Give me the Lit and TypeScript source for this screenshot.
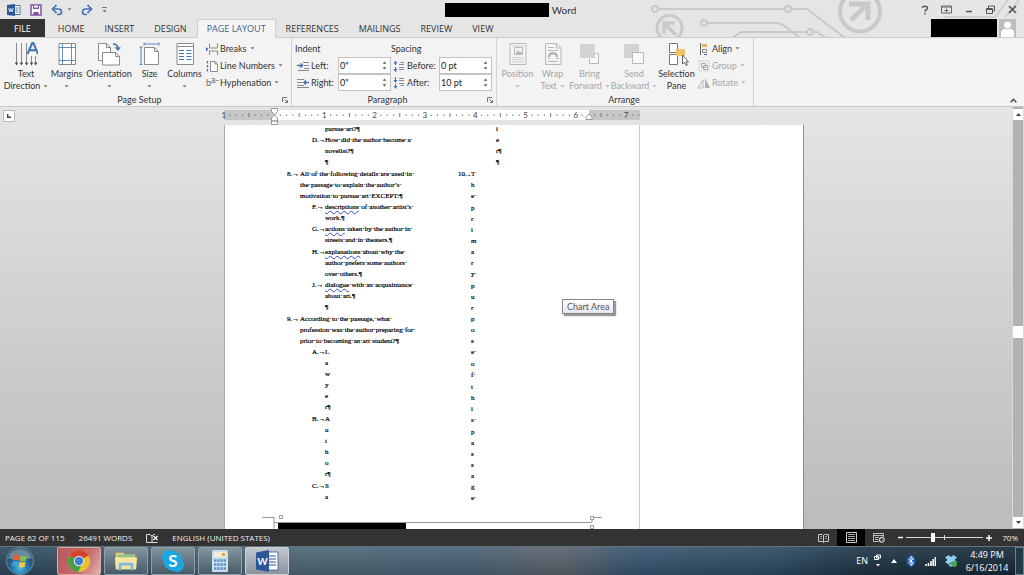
import { LitElement, html, css, svg, nothing } from "lit";
import { customElement } from "lit/decorators.js";

const caret = html`<svg class="caret" viewBox="0 0 5 3" width="5" height="3"><path d="M0.5 0.3h4L2.5 2.6z" fill="currentColor" /></svg>`;

const pic = (w: number, h: number, body: unknown) =>
  html`<svg width=${w} height=${h} viewBox="0 0 ${w} ${h}" fill="none" aria-hidden="true">${body}</svg>`;

const B = "#3f73b5";
const G = "#8a8a8a";
const D = "#b9b9b9";

const icons: Record<string, unknown> = {
  textDirection: pic(24, 24, svg`
    <path d="M2.5 1v20M7.5 1v20M12.5 1v20M17.5 14v7M21.5 14v7" stroke="${G}"/>
    <path d="M0.8 20.5h3.4L2.5 23.5zM5.8 20.5h3.4L7.5 23.5zM10.8 20.5h3.4L12.5 23.5zM15.8 20.5h3.4L17.5 23.5zM20 20.5h3.4L21.7 23.5z" fill="#444"/>
    <path d="M13.5 12L18.2 1h1.2L24 12M15.3 8.3h7" stroke="${B}" stroke-width="2"/>`),
  margins: pic(24, 24, svg`
    <path d="M4 1.5h16.5v21H4z" fill="#fff" stroke="${G}"/>
    <path d="M7.500 2v20M16.500 2v20M4 5.500h16M4 18.500h16" stroke="${B}" opacity=".8"/>`),
  orientation: pic(24, 24, svg`
    <path d="M1.500 1.500h8l4 4v13h-12z" fill="#fff" stroke="${G}"/><path d="M9.500 1.500v4h4" stroke="${G}"/>
    <path d="M5.500 10.500h13l4 4v8.500h-17z" fill="#fff" stroke="${G}"/><path d="M18.500 10.500v4h4" stroke="${G}"/>
    <path d="M16 2c3 0 5 1.500 5 5" stroke="${B}" stroke-width="1.500"/><path d="M17.800 5.200h6L21 9z" fill="${B}"/>`),
  size: pic(24, 24, svg`
    <path d="M6.500 5.500h10l4 4v13h-14z" fill="#fff" stroke="${G}"/><path d="M16.500 5.500v4h4" stroke="${G}"/>
    <path d="M6 2h15M3 5v18M6 .5v3M21 .5v3M1.500 5h3M1.500 22.500h3" stroke="${B}" opacity=".85"/>`),
  columns: pic(24, 24, svg`
    <path d="M4 1.500h16.500v21H4z" fill="#fff" stroke="${G}"/><path d="M4 4.500h16" stroke="${G}"/>
    <path d="M6 8.500h5M6 11.500h5M6 14.500h5M6 17.500h5M13.500 8.500h5M13.500 11.500h5M13.500 14.500h5M13.500 17.500h5" stroke="${B}"/>`),
  breaks: pic(12, 12, svg`
    <path d="M3.500 .5v4.500h8V.5M3.500 12V8h8v4" stroke="${G}"/><path d="M0 4l2.500 2.200L0 8.500z" fill="${B}"/>`),
  lineNumbers: pic(12, 12, svg`
    <path d="M4.500 1.500h4.500l2.500 2.500v7.500h-7z" fill="#fff" stroke="${G}"/><path d="M9 1.500V4h2.500" stroke="${G}"/>
    <path d="M1.500 1v2.500M1.500 5v2.500M1.500 9v2.500" stroke="${B}" stroke-width="1.300"/>`),
  hyphenation: html`<span class="hyph"><span>b</span><span class="up">a-</span></span>`,
  indentLeft: pic(12, 12, svg`<path d="M6 2.500h6M7 5.500h5M7 8.500h5M1 10.500h11" stroke="${G}"/><path d="M0 5.500h5" stroke="${B}" stroke-width="1.500"/><path d="M3.500 2.500l3 3-3 3z" fill="${B}"/>`),
  indentRight: pic(12, 12, svg`<path d="M0 2.500h7M0 5.500h6M0 8.500h7M0 10.500h12" stroke="${G}"/><path d="M7 5.500h5" stroke="${B}" stroke-width="1.500"/><path d="M9 2.500l-3 3 3 3z" fill="${B}"/>`),
  before: pic(12, 12, svg`<path d="M2.500 1v4M2.500 7v5" stroke="${B}"/><path d="M.5 3.500l2-3 2 3zM.5 9l2 3 2-3z" fill="${B}"/><path d="M6 4.500h5M7.500 2.500h3.500M6 7.500h5M6 9.500h5" stroke="${G}"/>`),
  after: pic(12, 12, svg`<path d="M2.500 0v4M2.500 7v4" stroke="${B}"/><path d="M.5 3l2 3 2-3zM.5 9l2 3 2-3z" fill="${B}"/><path d="M6 1.500h5M6 3.500h5M6 6.500h5M7.500 8.500h3.500" stroke="${G}"/>`),
  position: pic(24, 24, svg`<path d="M4 1.500h16v21H4z" fill="#f4f4f4" stroke="${D}"/><path d="M8.500 5.500h8v7h-8z" stroke="${D}"/><path d="M9.500 12l2.500-4 2 2.500 1-1 1.500 2.500z" fill="${D}"/><path d="M6 15.500h12M6 17.500h12M6 20h12M6 4h12" stroke="#d0d0d0"/>`),
  wrap: pic(24, 24, svg`<path d="M4.500 1.500h11l4.500 4.500v16.500H4.500z" fill="#f4f4f4" stroke="${D}"/><path d="M15.500 1.500V6h4.500M7 5.500h6M7 8.500h10M7 19.500h10M7 16.500h2M15 16.500h3" stroke="${D}"/><path d="M8 15c0-5 8-5 8 0" stroke="#aaa" stroke-width="2"/>`),
  forward: pic(24, 24, svg`<path d="M12.500 11.500h8v10h-9v-5" stroke="${D}" fill="#fafafa"/><path d="M2 2h15v14H2z" fill="#d4d2d4"/>`),
  backward: pic(24, 24, svg`<path d="M2 2h15v14H2z" fill="#d4d2d4"/><path d="M10.500 10.500h11v11h-11z" stroke="${D}" fill="#fafafa"/>`),
  selection: pic(24, 24, svg`<path d="M4.500 1.500h8v9h-8zM4.500 12.500h8v10h-8z" fill="#fff" stroke="#777"/><path d="M11 7h9v7h-9z" fill="#f2c26b"/><path d="M17.500 13v9l2-2 1.500 3.500 1.500-.7-1.500-3h2.500z" fill="#fff" stroke="#555" stroke-width=".9"/>`),
  align: pic(12, 12, svg`<path d="M2.500 0v12" stroke="#666"/><path d="M4 1h5v3H4z" fill="#e8b865"/><path d="M4.500 6.500h4v3h-4z" stroke="#888"/><path d="M6 11.500h3" stroke="${B}"/>`),
  group: pic(12, 12, svg`<path d="M1 1h10v10H1z" stroke="${D}" stroke-dasharray="1.500 1.500"/><path d="M3.500 3.500h4v4h-4zM5.500 5.500h4v4h-4z" stroke="#aaa"/>`),
  rotate: pic(12, 12, svg`<path d="M7 1v10h5z" fill="#b0b0b0"/><path d="M5 3v8H0z" stroke="${D}"/>`),
  chrome: pic(24, 24, svg`<circle cx="12" cy="12" r="11" fill="#e8c22c"/><path d="M12 12L2.500 6.500A11 11 0 0 1 21.500 6.500z" fill="#d6402f"/><path d="M2.500 6.500A11 11 0 0 0 11 23l4.500-9z" fill="#43a047"/><path d="M12 7h9.800a11 11 0 0 0-.5-1z" fill="#d6402f"/><circle cx="12" cy="12" r="5.200" fill="#eee"/><circle cx="12" cy="12" r="4.200" fill="#3f7fd0"/>`),
  folder: pic(26, 24, svg`<path d="M2 3h8l2 2h11v16H2z" fill="#e8cf74"/><path d="M4 5h18v5H4z" fill="#8fc48c"/><path d="M1 8h24l-1 13H2z" fill="#f5e6a3"/><path d="M5 22v-6q0-2 2-2h12q2 0 2 2v6h-3v-5H8v5z" fill="#7fb9dd"/>`),
  skype: html`<svg width="24" height="24" viewBox="0 0 24 24"><circle cx="8" cy="8" r="7" fill="#1ba6e0"/><circle cx="16" cy="16" r="7" fill="#1ba6e0"/><circle cx="12" cy="12" r="9.500" fill="#1ba6e0"/><text x="12" y="18" text-anchor="middle" font-size="17" font-weight="700" fill="#fff">S</text></svg>`,
  calc: pic(24, 24, svg`<rect x="4" y="1" width="16" height="22" rx="1.500" fill="#c9dff0"/><path d="M6 3h12v5H6z" fill="#f4f0e0"/><path d="M14 4h3v3h-3z" fill="#e8a040"/><path d="M6 11.500h12M6 15.500h12M6 19.500h12" stroke="#5f93c4" stroke-width="2.500" stroke-dasharray="2.400 .8"/>`),
  word: html`<svg width="24" height="24" viewBox="0 0 24 24"><path d="M12 3h11v18H12z" fill="#fff" stroke="#2b579a" stroke-width=".8"/><path d="M14 7h7M14 10h7M14 13h7M14 16h7" stroke="#2b579a"/><path d="M1 3.500L14 1v22L1 20.500z" fill="#2b579a"/><text x="7.500" y="16" text-anchor="middle" font-size="10" font-weight="700" fill="#fff">W</text></svg>`,
};

const big = (icon: string, lines: string[], cls: string, menu = true, off = false) => html`
  <button class="big ${cls}" ?disabled=${off}>
    ${icons[icon]}
    <span>${lines[0]}</span>
    <span class="second">${lines[1] ?? nothing}${menu ? caret : nothing}</span>
  </button>`;

const small = (icon: string, label: string, off = false) => html`
  <button class="small" ?disabled=${off}><span class="ic">${icons[icon]}</span>${label}${caret}</button>`;

const spin = (id: string, icon: string, label: string, value: string) => html`
  <label class="sl" for=${id}><span class="ic">${icons[icon]}</span>${label}</label>
  <div class="spin">
    <input id=${id} .value=${value} />
    <div class="steps">
      <button aria-label="Increase ${label}"><svg viewBox="0 0 5 3" width="5" height="3"><path d="M.7 2.700h3.600L2.500.5z" fill="#555"/></svg></button>
      <button aria-label="Decrease ${label}"><svg viewBox="0 0 5 3" width="5" height="3"><path d="M.7.3h3.600L2.500 2.500z" fill="#555"/></svg></button>
    </div>
  </div>`;

const dots = (s: string) => s.replace(/ /g, "·");
const lines = (ls: unknown[]) => ls.map((l) => html`<span class="line">${typeof l === "string" ? dots(l) : l}</span>`);
const item = (mark: string, ls: unknown[], cls = "") => html`
  <div class="item ${cls}"><span class="mark">${mark}<span class="tab">→</span></span><p>${lines(ls)}</p></div>`;
const bad = (word: string, rest: string) => html`<span class="bad">${word}</span>${dots(rest)}`;

const INCH = 50.3;
const ticks = () => {
  const out: unknown[] = [];
  for (let i = -8; i <= 58; i++) {
    const x = 53 + (i * INCH) / 8;
    if (i === 0) continue;
    if (i % 8 === 0) out.push(svg`<text x=${x} y="11" text-anchor="middle">${Math.abs(i / 8)}</text>`);
    else if (i % 4 === 0) out.push(svg`<path d="M${x} 6v4" stroke="#777"/>`);
    else out.push(svg`<path d="M${x} 7.500v1.500" stroke="#777"/>`);
  }
  return out;
};

@customElement("app-root")
export class AppRoot extends LitElement {
  static styles = css`
    :host {
      display: flex;
      flex-direction: column;
      height: 100vh;
      overflow: hidden;
      background: #e5e5e5;
      color: #333;
      font: 9px/12px Lato, "Open Sans", sans-serif;
    }
    * { box-sizing: border-box; }
    button, input { font: inherit; color: inherit; margin: 0; padding: 0; border: 0; background: none; border-radius: 0; }
    a { color: inherit; text-decoration: none; }
    p { margin: 0; }
    svg { display: block; flex: none; }

    .head { position: relative; flex: none; font-family: "Open Sans", sans-serif; }
    .circuit { position: absolute; right: 0; top: 0; }
    .title { position: relative; display: flex; height: 19px; align-items: center; }
    .quick { display: flex; align-items: center; flex: 1; padding-left: 7px; gap: 9px; }
    .quick button { display: flex; align-items: center; gap: 4px; color: #777; }
    .name { display: flex; align-items: center; gap: 3px; font: 10px/12px Lato, sans-serif; padding-right: 5px; }
    .redact { background: #000; width: 104px; height: 14px; }
    .win { flex: 1; display: flex; justify-content: flex-end; padding-right: 5px; gap: 9px; }
    .win button { display: grid; place-items: center; width: 13px; height: 16px; }
    .tabs { position: relative; display: flex; align-items: stretch; height: 19px; border-bottom: 1px solid #cfcfcf; }
    .tabs a { padding: 0 10px; line-height: 19px; white-space: nowrap; }
    .tabs .file { background: #333; color: #fff; padding: 0 14px; margin-right: 3px; }
    .tabs .on { background: #f4f4f4; color: #3a5f95; border: 1px solid #cfcfcf; border-bottom: 0; padding: 0 9px; line-height: 17px; height: 19px; }
    .user { margin-left: auto; display: flex; gap: 2px; padding-right: 8px; }
    .user .redact { width: 66px; height: 18px; }

    .ribbon { display: flex; flex: none; height: 69px; background: #f3f3f3; border-bottom: 1px solid #c8c8c8; }
    .group { display: flex; flex-direction: column; position: relative; padding-top: 2px; border-right: 1px solid #d2d2d2; }
    .body { display: flex; height: 54px; }
    .cap { text-align: center; color: #333; line-height: 12px; padding-right: 16px; }
    .arrange .cap { padding-right: 4px; }
    .launch { position: absolute; right: 3px; bottom: 3px; }
    .setup { padding-left: 4px; width: 292px; }
    .para { padding-left: 3px; width: 205px; }
    .arrange { padding-left: 2px; width: 257px; }
    .grow { flex: 1; display: flex; justify-content: flex-end; align-items: flex-end; padding: 0 7px 3px 0; }
    .big { display: flex; flex-direction: column; align-items: center; padding-top: 2px; white-space: nowrap; }
    .big > svg { margin-bottom: 2px; }
    .big .second { display: flex; align-items: center; gap: 3px; min-height: 12px; }
    .w33 { width: 33px; } .w37 { width: 37px; } .w41 { width: 41px; } .w44 { width: 44px; } .w48 { width: 48px; }
    button:disabled { color: #a6a6a6; }
    .stack { display: flex; flex-direction: column; padding-left: 3px; }
    .small { display: flex; align-items: center; height: 17px; white-space: nowrap; }
    .small .caret { margin-left: 3px; }
    .ic { width: 12px; margin-right: 2px; flex: none; }
    .caret { color: #777; }
    button:disabled .caret { color: #b5b5b5; }
    .hyph { display: flex; font-size: 9px; line-height: 10px; color: #666; }
    .hyph .up { margin-top: -3px; }
    .fields { display: grid; grid-template-columns: 43px 53px 48px 53px; grid-auto-rows: 17px; align-items: center; }
    .fields .h { grid-column: span 2; }
    .sl { display: flex; align-items: center; padding-left: 2px; white-space: nowrap; }
    .spin { display: flex; height: 17px; background: #fff; border: 1px solid #c3c3c3; }
    .spin input { flex: 1; min-width: 0; padding-left: 1px; color: #222; outline: 0; }
    .steps { display: flex; flex-direction: column; width: 12px; justify-content: space-evenly; align-items: center; }
    .steps button { line-height: 3px; }

    .work { position: relative; flex: 1; min-height: 0; display: flex; background: linear-gradient(#e5e5e5, #bdbdbd 95%); }
    .view { flex: 1; min-width: 0; display: flex; flex-direction: column; align-items: center; padding-left: 16px; position: relative; }
    .corner { position: absolute; left: 3px; top: 3px; width: 12px; height: 12px; background: #fff; border: 1px solid #bbb; display: grid; place-items: center; }
    .rulerrow { width: 586px; height: 18px; flex: none; }
    .rulerrow text { font-size: 8px; fill: #444; }
    .page { flex: 1; min-height: 0; width: 580px; background: #fff; border-left: 1px solid #aaa; border-right: 1px solid #8d8d8d; display: flex; flex-direction: column; overflow: hidden; }
    .sheet { flex: 1; min-height: 0; width: 415px; border-right: 1px solid #c9c9c9; display: grid; grid-template-columns: 171px 1fr; grid-template-rows: minmax(0, 1fr); padding-left: 62px; font: 7px/11px "Liberation Serif", serif; color: #000; -webkit-text-stroke: 0.2px #000; }
    .tail { width: 415px; height: 14px; flex: none; border-right: 1px solid #c9c9c9; }
    .col { margin-top: -1px; }
    .line { display: block; min-height: 11px; white-space: nowrap; }
    .item { display: flex; }
    .mark { width: 13px; flex: none; display: flex; white-space: nowrap; }
    .tab { width: 7px; font-weight: 700; }
    .tight .tab { width: 4px; font-size: 4px; }
    .sub { padding-left: 25px; }
    .deep { padding-left: 38px; }
    .gap { margin-top: 1px; }
    .bad { text-decoration: underline wavy #3a49c9 1px; text-underline-offset: 1px; text-decoration-skip-ink: none; }
    .word { display: block; margin-bottom: 1px; }
    .tip { position: absolute; left: 562px; top: 192px; padding: 0 4px; line-height: 13px; color: #555; background: linear-gradient(#fff, #e6e7f2); border: 1px solid #858585; box-shadow: 2px 2px 1px #999; }

    .scroll { width: 12px; flex: none; display: flex; flex-direction: column; align-items: center; background: #b2b2b2; padding: 2px 0 1px; border: solid #dadada; border-width: 0 1px; }
    .scroll button { width: 10px; height: 11px; background: #fff; display: grid; place-items: center; }
    .thumb { width: 10px; height: 12px; background: #fff; }
    .f205 { flex: 205; } .f178 { flex: 178; }

    .status { display: flex; flex: none; align-items: center; height: 17px; background: #333; color: #f0f0f0; padding: 0 6px 0 5px; font: 8px/12px "Open Sans", sans-serif; }
    .status span { white-space: nowrap; }
    .stat { display: flex; gap: 14px; flex: 1; align-items: center; }
    .views { display: flex; align-items: center; }
    .views button { width: 28px; height: 17px; display: grid; place-items: center; }
    .views .active { background: #000; }
    .zoom { display: flex; align-items: center; gap: 3px; padding-left: 4px; }
    .zoom button { width: 6px; display: grid; place-items: center; }
    .range { -webkit-appearance: none; appearance: none; width: 77px; height: 11px; background: linear-gradient(#ddd, #ddd) 50% 50% / 100% 1px no-repeat, linear-gradient(#ddd, #ddd) 50% 50% / 1px 5px no-repeat; }
    .range::-webkit-slider-thumb { -webkit-appearance: none; width: 4px; height: 9px; background: #fff; }
    .pct { padding-left: 7px; }

    .task { display: flex; flex: none; align-items: stretch; height: 29px; color: #fff; border-top: 1px solid #5f7480; padding-left: 6px;
      background: linear-gradient(rgba(255,255,255,.1), rgba(0,0,0,.12)), linear-gradient(90deg, #2b4658, #4b6474 30%, #456073 45%, #5a5f6a 55%, #33536e 62%, #2b4961 75%, #1c3142 85%, #152634); }
    .apps { display: flex; gap: 3px; padding-left: 23px; }
    .app { width: 44px; display: grid; place-items: center; border: 1px solid #8fa0aa; border-radius: 2px; background: linear-gradient(#83939c, #465b68); }
    .app svg { width: 24px; height: 24px; }
    .app.red { background: linear-gradient(120deg, #b9585c, #c66a6c 60%, #dfb3b3); border-color: #d8a8a8; }
    .app.lit { background: linear-gradient(#c3c8ce, #8b949d); border-color: #ccd2d6; }
    .tray { margin-left: auto; display: flex; align-items: center; font-family: "Open Sans", sans-serif; }
    .tray button { display: grid; place-items: center; }
    .notes { display: flex; align-items: center; gap: 9px; padding-left: 6px; }
    .clock { text-align: center; width: 56px; padding-left: 4px; line-height: 13px; }
    .peek { width: 9px; align-self: stretch; margin-left: 2px; border: 1px solid #6d7f8c; background: #22394a; }
  `;

  render() {
    const go = (e: Event) => e.preventDefault();
    return html`
      <header class="head">
        <svg class="circuit" width="384" height="38" viewBox="640 0 384 38" fill="none" stroke="#c9c9c9" stroke-width="2">
          <circle cx="655" cy="9" r="3"/><path d="M658 9h127M791 9h16l38 29"/><circle cx="788" cy="9" r="3"/>
          <circle cx="704" cy="23" r="3"/><path d="M707 23h69q6 0 10 4l14 11M733 38l6-5q2-1 4-1h64M813 32h4l9 6"/><circle cx="810" cy="32" r="3"/>
          <circle cx="669.500" cy="28" r="12.500" stroke-width="3"/><path d="M664 34V23h11M664 23l12 12" stroke-width="3.500"/>
          <circle cx="860" cy="11.500" r="20" stroke-width="4"/><path d="M849 4h19v16M868 4l-17 16" stroke-width="5"/>
          <path d="M930 37l15-20h50l13-17M1005 17l14-17" stroke="#d0d0d0"/>
        </svg>
        <div class="title">
          <div class="quick">
            <svg width="14" height="12" viewBox="0 0 14 12"><path d="M6 1.500h7v9H6z" fill="#fff" stroke="#2b579a" stroke-width=".8"/><path d="M8.500 4h3M8.500 6h3M8.500 8h3" stroke="#2b579a" stroke-width=".8"/><path d="M0 1l8-1v12l-8-1z" fill="#2b579a"/><path d="M1.800 4l1 4 1.200-3.500L5.200 8l1-4" stroke="#fff" fill="none" stroke-width=".8"/></svg>
            <button aria-label="Save">${pic(12, 12, svg`<path d="M1 1h10v10H1z" fill="#fff" stroke="#8351a3" stroke-width="1.500"/><path d="M3 1h6v4H3zM3.500 8h5v3h-5z" fill="#8351a3"/><path d="M4 1.500h4v2H4z" fill="#fff"/>`)}</button>
            <button aria-label="Undo">${pic(12, 12, svg`<path d="M1.500 5h6c4 0 4 5.500 0 5.500H6" stroke="#3f73b5" stroke-width="1.700"/><path d="M5.500 1L1.500 5l4 4" stroke="#3f73b5" stroke-width="1.700"/>`)}${caret}</button>
            <button aria-label="Redo">${pic(12, 12, svg`<path d="M10.500 5h-6c-4 0-4 5.500 0 5.500H6" stroke="#3f73b5" stroke-width="1.700"/><path d="M6.500 1l4 4-4 4" stroke="#3f73b5" stroke-width="1.700"/>`)}</button>
            <button aria-label="Customize">${pic(5, 6, svg`<path d="M0 .5h5" stroke="#777"/><path d="M.5 3h4L2.500 5.500z" fill="#777"/>`)}</button>
          </div>
          <div class="name"><span class="redact"></span><span>Word</span></div>
          <div class="win">
            <button aria-label="Help">${pic(8, 10, svg`<path d="M1.500 3c0-2.500 5-2.500 5 0 0 1.700-2.500 1.700-2.500 3.700M4 8v1.500" stroke="#555" stroke-width="1.500"/>`)}</button>
            <button aria-label="Ribbon options">${pic(11, 9, svg`<path d="M.5 1h10v7H.5zM.5 2h10" stroke="#666"/><path d="M5.500 3.500v4M3.500 5.500h4" stroke="#666"/>`)}</button>
            <button aria-label="Minimize">${pic(8, 8, svg`<path d="M1 5.500h6" stroke="#555" stroke-width="1.500"/>`)}</button>
            <button aria-label="Restore">${pic(9, 9, svg`<path d="M2.500 3V1h6v5h-2M.5 3.500h6v5h-6zM.5 4.500h6" stroke="#555"/>`)}</button>
            <button aria-label="Close">${pic(9, 9, svg`<path d="M1 1l7 7M8 1L1 8" stroke="#555" stroke-width="1.700"/>`)}</button>
          </div>
        </div>
        <nav class="tabs" @click=${go}>
          <a class="file" href="#file">FILE</a>
          ${["HOME", "INSERT", "DESIGN", "PAGE LAYOUT", "REFERENCES", "MAILINGS", "REVIEW", "VIEW"].map(
            (t) => html`<a class=${t === "PAGE LAYOUT" ? "on" : ""} href="#tab">${t}</a>`
          )}
          <div class="user"><span class="redact"></span>
            ${pic(17, 18, svg`<path d="M0 0h17v18H0z" fill="#bdbdbd"/><path d="M2 18v-4q0-4 4-4h5q4 0 4 4v4z" fill="#fff"/><circle cx="8.500" cy="6" r="4" fill="#fff" stroke="#bdbdbd"/>`)}
          </div>
        </nav>
      </header>

      <section class="ribbon">
        <div class="group setup">
          <div class="body">
            ${big("textDirection", ["Text", "Direction"], "w44")} ${big("margins", ["Margins"], "w37")}
            ${big("orientation", ["Orientation"], "w48")} ${big("size", ["Size"], "w33")} ${big("columns", ["Columns"], "w37")}
            <div class="stack">${small("breaks", "Breaks")} ${small("lineNumbers", "Line Numbers")} ${small("hyphenation", "Hyphenation")}</div>
          </div>
          <div class="cap">Page Setup</div>${this.launcher("Page Setup")}
        </div>
        <div class="group para">
          <div class="body">
            <div class="fields">
              <span class="h">Indent</span><span class="h">Spacing</span>
              ${spin("left", "indentLeft", "Left:", '0"')} ${spin("before", "before", "Before:", "0 pt")}
              ${spin("right", "indentRight", "Right:", '0"')} ${spin("after", "after", "After:", "10 pt")}
            </div>
          </div>
          <div class="cap">Paragraph</div>${this.launcher("Paragraph")}
        </div>
        <div class="group arrange">
          <div class="body">
            ${big("position", ["Position"], "w37", true, true)} ${big("wrap", ["Wrap", "Text"], "w33", true, true)}
            ${big("forward", ["Bring", "Forward"], "w41", true, true)} ${big("backward", ["Send", "Backward"], "w48", true, true)}
            ${big("selection", ["Selection", "Pane"], "w37", false)}
            <div class="stack">${small("align", "Align")} ${small("group", "Group", true)} ${small("rotate", "Rotate", true)}</div>
          </div>
          <div class="cap">Arrange</div>
        </div>
        <div class="grow"><button aria-label="Collapse the ribbon">${pic(7, 5, svg`<path d="M.7 4.300l2.800-3 2.800 3" stroke="#444" stroke-width="1.300"/>`)}</button></div>
      </section>

      <main class="work">
        <div class="view">
          <div class="corner">${pic(4, 4, svg`<path d="M.7 0v3.300H4" stroke="#444" stroke-width="1.400"/>`)}</div>
          <div class="rulerrow">
            <svg width="419" height="18" viewBox="0 0 419 18">
              <path d="M3 3h416v10H3z" fill="#c6c6c6"/><path d="M53 3h315v10H53z" fill="#fff"/>${ticks()}
              <path d="M50.500 1.500h6v3l-3 3.500-3-3.500zM50.500 14v-3l3-3 3 3v3zM50.500 14h6v3.500h-6zM365 12.500v-2.500l3-3 3 3v2.500z" fill="#fff" stroke="#999"/>
            </svg>
          </div>
          <article class="page">
            <div class="sheet">
              <div class="col">
                <div class="deep">${lines(["pursue art?¶"])}</div>
                ${item("D.", ["How did the author become a ", "novelist?¶", "¶"], "sub")}
                ${item("8.", ["All of the following details are used in ", "the passage to explain the author’s ", "motivation to pursue art EXCEPT:¶"], "gap")}
                ${item("F.", [bad("descriptions", " of another artist’s "), "work.¶"], "sub")}
                ${item("G.", [bad("actions", " taken by the author in "), "streets and in theaters.¶"], "sub")}
                ${item("H.", [bad("explanations", " about why the "), "author prefers some authors ", "over others.¶"], "sub gap")}
                ${item("J.", [bad("dialogue", " with an acquaintance "), "about art.¶", "¶"], "sub")}
                ${item("9.", ["According to the passage, what ", "profession was the author preparing for ", "prior to becoming an art student?¶"], "gap")}
                ${item("A.", ["L", "a", "w", "y", "e", "r¶"], "sub")}
                ${item("B.", ["A", "u", "t", "h", "o", "r¶"], "sub gap")}
                ${item("C.", ["S", "a"], "sub gap")}
              </div>
              <div class="col">
                <div class="deep">${lines(["i", "e", "r¶", "¶"])}</div>
                <div class="item gap"><span class="mark tight">10.<span class="tab">→</span></span>
                  <p>${["The ", "primary ", "purpose ", "of ", "this ", "passage "].map(
                    (w) => html`<span class="word">${lines(w.match(/\S ?/g) ?? [])}</span>`
                  )}</p></div>
              </div>
            </div>
            <div class="tail">
              <svg width="414" height="14" viewBox="225 515 414 14" fill="none" stroke="#999">
                <path d="M262 517.500h12v11M274 522.500h318v-5h10"/>
                <path d="M278 523h128v6H278z" fill="#000" stroke="none"/>
                <path d="M279.500 515.500h3v3h-3zM590.500 516.500h3v3h-3zM590.500 525.500h3v3h-3z" fill="#fff"/>
              </svg>
            </div>
          </article>
        </div>
        <div class="tip" role="tooltip">Chart Area</div>
        <div class="scroll">
          <button aria-label="Scroll up">${pic(5, 3, svg`<path d="M0 3h5L2.500 0z" fill="#444"/>`)}</button>
          <span class="f205"></span><span class="thumb"></span><span class="f178"></span>
          <button aria-label="Scroll down">${pic(5, 3, svg`<path d="M0 0h5L2.500 3z" fill="#444"/>`)}</button>
        </div>
      </main>

      <section class="status">
        <div class="stat">
          <span>PAGE 62 OF 115</span><span>26491 WORDS</span>
          ${pic(12, 10, svg`<path d="M6 9.500H.5v-8H4L6 3v7M6 3l1.500-1.500H9" stroke="#ddd"/><path d="M7.500 3l4 4M11.500 3l-4 4" stroke="#fff" stroke-width="1.200"/><path d="M6 9.500h5.500" stroke="#ddd"/>`)}
          <span>ENGLISH (UNITED STATES)</span>
        </div>
        <div class="views">
          <button aria-label="Read mode">${pic(11, 10, svg`<path d="M.5 1.500h4l1 1 1-1h4v7h-4l-1 1-1-1h-4zM5.500 2v7" stroke="#ccc"/><path d="M2 3.500h2M2 5.500h2M7 3.500h2M7 5.500h2" stroke="#999"/>`)}</button>
          <button class="active" aria-label="Print layout">${pic(11, 11, svg`<path d="M.5.5h10v10H.5z" stroke="#ccc"/><path d="M2 2.500h7M2 4.500h7M2 6.500h7M2 8.500h7" stroke="#aaa"/>`)}</button>
          <button aria-label="Web layout">${pic(12, 11, svg`<path d="M6 9.500H.5v-8h10V5M.5 3.500h10M2 5.500h4M2 7.500h3" stroke="#bbb"/><circle cx="8.800" cy="7.800" r="2.500" fill="#555" stroke="#eee"/>`)}</button>
        </div>
        <div class="zoom">
          <button aria-label="Zoom out">${pic(5, 5, svg`<path d="M0 2.500h5" stroke="#fff" stroke-width="1.500"/>`)}</button>
          <input class="range" type="range" min="0" max="100" value="34" aria-label="Zoom" />
          <button aria-label="Zoom in">${pic(6, 6, svg`<path d="M0 3h6M3 0v6" stroke="#fff" stroke-width="1.500"/>`)}</button>
          <span class="pct">70%</span>
        </div>
      </section>

      <footer class="task">
        <button aria-label="Start">
          <svg width="28" height="28" viewBox="0 0 28 28"><defs><radialGradient id="orb" cx=".5" cy=".75"><stop offset="0" stop-color="#4fc0e8"/><stop offset=".6" stop-color="#2672a8"/><stop offset="1" stop-color="#2d5573"/></radialGradient></defs>
            <circle cx="14" cy="14" r="13.500" fill="url(#orb)" stroke="#7fa5bb" stroke-width=".7"/><path d="M2 11a12.500 12.500 0 0 1 24 0q-12 3-24 0z" fill="#fff" opacity=".3"/>
            <path d="M8 8.500q3-1.500 6 0l-1 5q-3-1-6 0z" fill="#e8602c"/><path d="M15 8.800q3 1.200 6 0l-1.200 5q-3 1-5.800 0z" fill="#86c440"/><path d="M6.800 14.500q3-1 6 0l-1 5q-3-1.500-6 0z" fill="#3f9fe0"/><path d="M13.800 14.800q3 1.200 6 0l-1.200 5q-3 1.200-6 0z" fill="#f7c832"/></svg>
        </button>
        <div class="apps">
          <button class="app red" aria-label="Chrome">${icons.chrome}</button>
          <button class="app" aria-label="Explorer">${icons.folder}</button>
          <button class="app" aria-label="Skype">${icons.skype}</button>
          <button class="app" aria-label="Calculator">${icons.calc}</button>
          <button class="app lit" aria-label="Word">${icons.word}</button>
        </div>
        <div class="tray">
          <span>EN</span>
          <div class="notes">
            ${pic(8, 14, svg`<path d="M2.500 1h4v3h-4zM.500 2.500h4v3h-4z" stroke="#fff"/><path d="M2 10h4L4 12.500z" fill="#fff"/>`)}
            <button aria-label="Hidden icons">${pic(6, 4, svg`<path d="M0 4h6L3 0z" fill="#fff"/>`)}</button>
            ${pic(10, 12, svg`<ellipse cx="5" cy="6" rx="4.500" ry="5.800" fill="#1f5fb8"/><path d="M2.500 3.800l5 4.400L5 10.500v-9l2.500 2.300-5 4.400" stroke="#fff"/>`)}
            ${pic(11, 10, svg`<path d="M1 10V8M3.500 10V7M6 10V5M8.200 10V3M10.400 10V1" stroke="#fff" stroke-width="1.600"/>`)}
            ${pic(12, 12, svg`<path d="M3.500 0L0 2.500 2.500 5 0 7l3.500 2.500L6 7.500l2.500 2L12 7 9.500 5 12 2.500 8.500 0 6 2zM3.500 10L6 12l2.500-2L6 8.500z" fill="#8fd0f2"/><circle cx="9" cy="9" r="3" fill="#49a84f"/>`)}
          </div>
          <div class="clock">4:49 PM<br />6/16/2014</div>
          <button class="peek" aria-label="Show desktop"></button>
        </div>
      </footer>`;
  }

  launcher(name: string) {
    return html`<button class="launch" aria-label="${name} settings">${pic(6, 6, svg`<path d="M.5 5V.5H5M2.500 2.500l3 3M5.500 3v2.500H3" stroke="#777"/>`)}</button>`;
  }
}
